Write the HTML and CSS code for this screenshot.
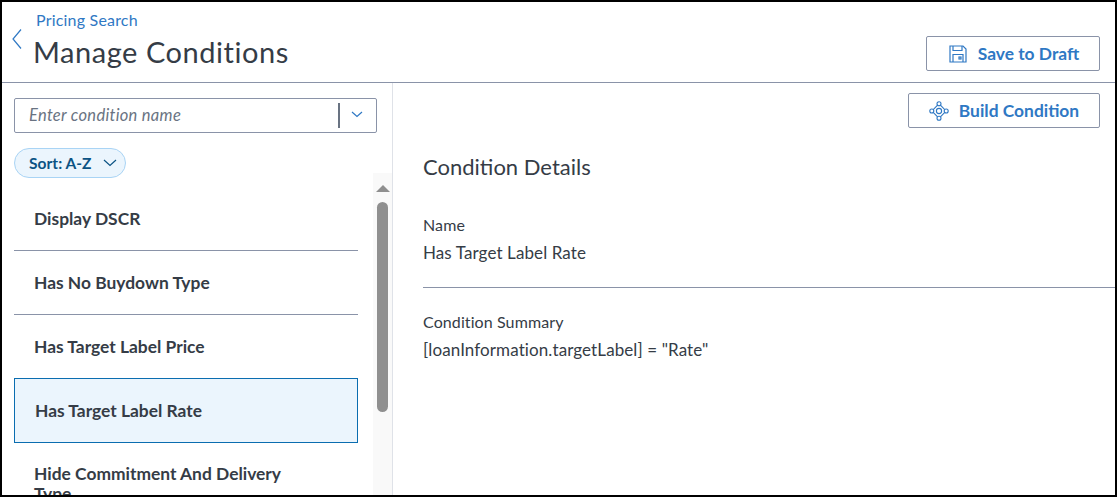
FILE: index.html
```html
<!DOCTYPE html>
<html>
  <head>
    <title>Manage Conditions</title>
    <link rel="stylesheet" href="styles.css">
  </head>
  <body>
    <div class="frame">
      <header class="top">
        <svg class="back" width="10" height="22" viewBox="0 0 10 22"><path d="M9 0.5 L1 10 L9 19.5" fill="none" stroke="#2f78c4" stroke-width="1.2"/></svg>
        <div class="titles">
          <a class="crumb">Pricing Search</a>
          <h1>Manage Conditions</h1>
        </div>
        <button class="btn save">
          <svg width="18" height="18" viewBox="0 0 18 18" fill="none" stroke="#2f78c4" stroke-width="1.2"><path d="M1 1 H14 L17 4 V17 H1 Z"/><path d="M4 1 V5.5 H13 V1"/><path d="M4 17 V9.5 H14 V17"/><rect x="10" y="12" width="2" height="2"/></svg>
          Save to Draft
        </button>
      </header>

      <div class="main">
        <aside class="side">
          <div class="search">
            <span class="placeholder">Enter condition name</span>
            <span class="divider"></span>
            <svg width="12" height="7" viewBox="0 0 12 7"><path d="M1 1 L6 5.5 L11 1" fill="none" stroke="#2f78c4" stroke-width="1.2"/></svg>
          </div>
          <div class="sort">
            Sort: A-Z
            <svg width="14" height="8" viewBox="0 0 14 8"><path d="M1 1 L7 6.5 L13 1" fill="none" stroke="#0b5384" stroke-width="1.2"/></svg>
          </div>
          <div class="listwrap">
            <ul class="list">
              <li>Display DSCR</li>
              <li>Has No Buydown Type</li>
              <li>Has Target Label Price</li>
              <li class="selected">Has Target Label Rate</li>
              <li class="last">Hide Commitment And Delivery Type</li>
            </ul>
            <div class="scrollbar">
              <span class="arrow"></span>
              <span class="thumb"></span>
            </div>
          </div>
        </aside>

        <section class="details">
          <div class="actions">
            <button class="btn build">
              <svg width="20" height="20" viewBox="0 0 20 20" fill="none" stroke="#2f78c4" stroke-width="1.1"><circle cx="10" cy="10" r="2.6"/><circle cx="10" cy="2.8" r="2"/><circle cx="10" cy="17.2" r="2"/><circle cx="2.8" cy="10" r="2"/><circle cx="17.2" cy="10" r="2"/><path d="M8.6 4.2 L4.2 8.6 M11.4 4.2 L15.8 8.6 M4.2 11.4 L8.6 15.8 M15.8 11.4 L11.4 15.8"/></svg>
              Build Condition
            </button>
          </div>
          <h2>Condition Details</h2>
          <div class="field first">
            <div class="label">Name</div>
            <div class="value">Has Target Label Rate</div>
          </div>
          <div class="field">
            <div class="label">Condition Summary</div>
            <div class="value">[loanInformation.targetLabel] = "Rate"</div>
          </div>
        </section>
      </div>
    </div>
  </body>
</html>
```

FILE: styles.css
```css
*{
  box-sizing: border-box;
}
body{
  margin: 0;
  font-family: Lato, "Open Sans", sans-serif;
  color: #353c46;
  background: #fff;
}
.frame{
  width: 1117px;
  height: 497px;
  border: 2px solid #000;
  overflow: hidden;
  display: flex;
  flex-direction: column;
}
.top{
  height: 81px;
  flex: none;
  border-bottom: 1px solid #8a93a8;
  display: flex;
  padding: 9px 15px 0 10px;
}
.back{
  margin-top: 18px;
}
.titles{
  margin-left: 11px;
}
.crumb{
  display: block;
  font-size: 16px;
  letter-spacing: .2px;
  line-height: 18px;
  color: #2f78c4;
  margin-left: 3px;
}
h1{
  margin: 5px 0 0;
  font-size: 29px;
  letter-spacing: .55px;
  line-height: 36px;
  font-weight: 400;
}
.btn{
  display: flex;
  align-items: center;
  justify-content: center;
  height: 35px;
  background: #fff;
  border: 1px solid #8a93a8;
  border-radius: 2px;
  font-family: inherit;
  font-size: 17.4px;
  font-weight: 700;
  color: #2f78c4;
}
.save{
  width: 174px;
  gap: 11px;
  margin: 25px 0 0 auto;
  padding-left: 8px;
}
.build{
  width: 192px;
  gap: 10px;
}
.main{
  flex: 1;
  display: flex;
  min-height: 0;
}
.side{
  width: 391px;
  flex: none;
  border-right: 1px solid #dfe2e8;
  padding-top: 15px;
}
.search{
  width: 363px;
  height: 35px;
  margin-left: 12px;
  border: 1px solid #8a93a8;
  border-radius: 2px;
  display: flex;
  align-items: center;
  padding: 0 13px 2px 14px;
}
.placeholder{
  flex: 1;
  font-size: 16.5px;
  letter-spacing: .3px;
  font-style: italic;
  color: #697382;
}
.divider{
  width: 2px;
  height: 25px;
  background: #697382;
  margin: 2px 11px 0 0;
}
.sort{
  display: inline-flex;
  align-items: center;
  gap: 11px;
  height: 30px;
  margin: 15px 0 0 12px;
  padding: 0 8px 0 14px;
  background: #ebf5fd;
  border: 1px solid #a9d4f5;
  border-radius: 15px;
  font-size: 15.5px;
  letter-spacing: .05px;
  font-weight: 700;
  color: #0b5384;
}
.listwrap{
  display: flex;
  margin-top: -5px;
  height: 325px;
  overflow: hidden;
}
.list{
  list-style: none;
  margin: 0 0 0 12px;
  padding: 14px 0 0;
  width: 344px;
  flex: none;
}
.list li{
  height: 64px;
  padding: 0 20px 1px;
  display: flex;
  align-items: center;
  border-bottom: 1px solid #8a93a8;
  font-size: 17.4px;
  font-weight: 700;
}
.list li.selected{
  background: #ebf5fd;
  border: 1px solid #0a6db0;
  margin-top: -1px;
  height: 65px;
}
.list li.last{
  display: block;
  border: 0;
  padding: 21px 50px 0 20px;
  line-height: 20px;
  height: auto;
}
.scrollbar{
  width: 19px;
  margin-left: 15px;
  background: #f9f9f9;
  display: flex;
  flex-direction: column;
  align-items: center;
}
.arrow{
  width: 0;
  height: 0;
  margin-top: 12px;
  border-left: 7px solid transparent;
  border-right: 7px solid transparent;
  border-bottom: 7px solid #8f8f8f;
}
.thumb{
  width: 11px;
  height: 210px;
  margin-top: 10px;
  background: #8f8f8f;
  border-radius: 6px;
}
.details{
  flex: 1;
  min-width: 0;
  padding: 0 15px 0 30px;
}
.actions{
  display: flex;
  justify-content: flex-end;
  margin-top: 10px;
}
h2{
  margin: 26px 0 0;
  font-size: 22px;
  line-height: 26px;
  font-weight: 400;
}
.field{
  margin-right: -15px;
}
.field.first{
  margin-top: 36px;
  padding-bottom: 24px;
  border-bottom: 1px solid #8a93a8;
}
.field:not(.first){
  margin-top: 25px;
}
.label{
  font-size: 16px;
  letter-spacing: .1px;
  line-height: 18px;
}
.value{
  margin-top: 9px;
  font-size: 17px;
  letter-spacing: .1px;
  line-height: 20px;
}
```
